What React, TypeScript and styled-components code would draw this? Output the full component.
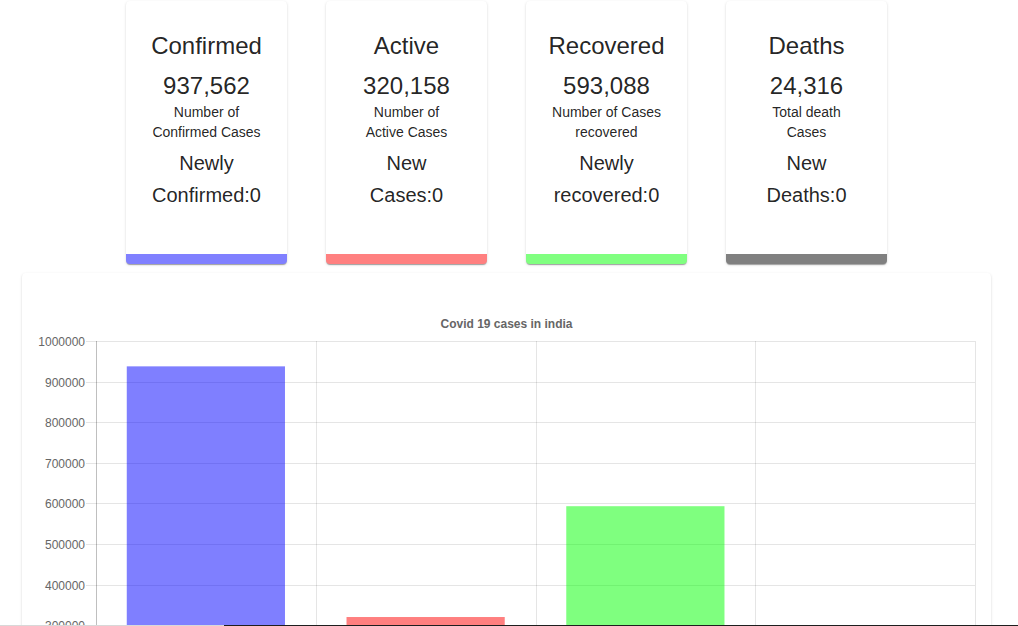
import React from "react";
import styled, { createGlobalStyle } from "styled-components";

const GlobalStyle = createGlobalStyle`
  html, body {
    margin: 0;
    padding: 0;
    background: #ffffff;
    font-family: "Liberation Sans", Arial, sans-serif;
    color: rgba(0, 0, 0, 0.87);
    overflow: hidden;
  }
`;

const Page = styled.div`
  padding-top: 1px;
  height: 626px;
  box-sizing: border-box;
`;

const CardsRow = styled.div`
  display: flex;
  gap: 39px;
  padding-left: 126px;
`;

const StatCard = styled.div<{ $bar: string }>`
  width: 161px;
  height: 263px;
  box-sizing: border-box;
  padding: 29px 20px 0;
  background: #fff;
  border-radius: 4px;
  border-bottom: 10px solid ${(p) => p.$bar};
  box-shadow: 0px 2px 1px -1px rgba(0, 0, 0, 0.2), 0px 1px 1px 0px rgba(0, 0, 0, 0.14),
    0px 1px 3px 0px rgba(0, 0, 0, 0.12);
  text-align: center;
  display: flex;
  flex-direction: column;
`;

const Title = styled.div`
  font-size: 24px;
  line-height: 32px;
  margin-bottom: 8px;
`;

const Count = styled.div`
  font-size: 24px;
  line-height: 32px;
`;

const Desc = styled.div`
  font-size: 14px;
  line-height: 20px;
`;

const DescLine = styled.span`
  display: block;
  white-space: nowrap;
`;

const NewLine = styled.div`
  font-size: 20px;
  line-height: 32px;
  margin-top: 5px;
`;

const NewPart = styled.span`
  display: block;
  white-space: nowrap;
`;

const ChartCard = styled.div`
  margin: 9px 0 0 22px;
  width: 969px;
  height: 460px;
  background: #fff;
  border-radius: 4px;
  box-shadow: 0px 2px 1px -1px rgba(0, 0, 0, 0.2), 0px 1px 1px 0px rgba(0, 0, 0, 0.14),
    0px 1px 3px 0px rgba(0, 0, 0, 0.12);
  overflow: hidden;
`;

const ChartSvg = styled.svg`
  display: block;
  font-family: "Liberation Sans", Arial, sans-serif;
`;

const BottomEdge = styled.div`
  position: fixed;
  left: 0;
  right: 0;
  bottom: 0;
  height: 1px;
  background: linear-gradient(to right, #d8d8d8 0, #d8d8d8 224px, #1e1e1e 224px, #1e1e1e 100%);
`;

const stats = [
  { title: "Confirmed", count: "937,562", desc: ["Number of", "Confirmed Cases"], newText: ["Newly", "Confirmed:0"], bar: "#8080ff" },
  { title: "Active", count: "320,158", desc: ["Number of", "Active Cases"], newText: ["New", "Cases:0"], bar: "#ff8080" },
  { title: "Recovered", count: "593,088", desc: ["Number of Cases", "recovered"], newText: ["Newly", "recovered:0"], bar: "#80ff80" },
  { title: "Deaths", count: "24,316", desc: ["Total death", "Cases"], newText: ["New", "Deaths:0"], bar: "#808080" },
];

const bars = [
  { value: 937562, color: "rgba(0,0,255,0.5)" },
  { value: 320158, color: "rgba(255,0,0,0.5)" },
  { value: 593088, color: "rgba(0,255,0,0.5)" },
  { value: 24316, color: "rgba(0,0,0,0.5)" },
];

const Chart: React.FC = () => {
  const left = 96;
  const right = 975;
  const top = 341;
  const bottom = 747;
  const max = 1000000;
  const catW = (right - left) / 4;
  const yOf = (v: number) => top + (1 - v / max) * (bottom - top);
  const ticks = Array.from({ length: 11 }, (_, i) => max - i * 100000);
  return (
    <ChartSvg width={969} height={460} viewBox="22 273 969 460">
      <text x={506.5} y={328} textAnchor="middle" fontSize={12} fontWeight="bold" fill="#666">
        Covid 19 cases in india
      </text>
      {ticks.map((t) => {
        const y = Math.round(yOf(t)) + 0.5;
        return (
          <g key={t}>
            <line x1={86} x2={right} y1={y} y2={y} stroke={t === 0 ? "rgba(0,0,0,0.25)" : "rgba(0,0,0,0.1)"} />
            <text x={85} y={y} dy="0.35em" textAnchor="end" fontSize={12} fill="#666">
              {t}
            </text>
          </g>
        );
      })}
      {[0, 1, 2, 3, 4].map((i) => {
        const x = Math.round(left + i * catW) + 0.5;
        return (
          <line
            key={i}
            x1={x}
            x2={x}
            y1={top}
            y2={bottom + 10}
            stroke={i === 0 ? "rgba(0,0,0,0.25)" : "rgba(0,0,0,0.1)"}
          />
        );
      })}
      {bars.map((b, i) => {
        const w = catW * 0.72;
        const x = left + i * catW + (catW - w) / 2;
        const y = yOf(b.value);
        return <rect key={i} x={x} y={y} width={w} height={bottom - y} fill={b.color} />;
      })}
    </ChartSvg>
  );
};

export default function App() {
  return (
    <>
      <GlobalStyle />
      <Page>
        <CardsRow>
          {stats.map((s) => (
            <StatCard key={s.title} $bar={s.bar}>
              <Title>{s.title}</Title>
              <Count>{s.count}</Count>
              <Desc>
                {s.desc.map((d) => (
                  <DescLine key={d}>{d}</DescLine>
                ))}
              </Desc>
              <NewLine>
                {s.newText.map((n) => (
                  <NewPart key={n}>{n}</NewPart>
                ))}
              </NewLine>
            </StatCard>
          ))}
        </CardsRow>
        <ChartCard>
          <Chart />
        </ChartCard>
      </Page>
      <BottomEdge />
    </>
  );
}
